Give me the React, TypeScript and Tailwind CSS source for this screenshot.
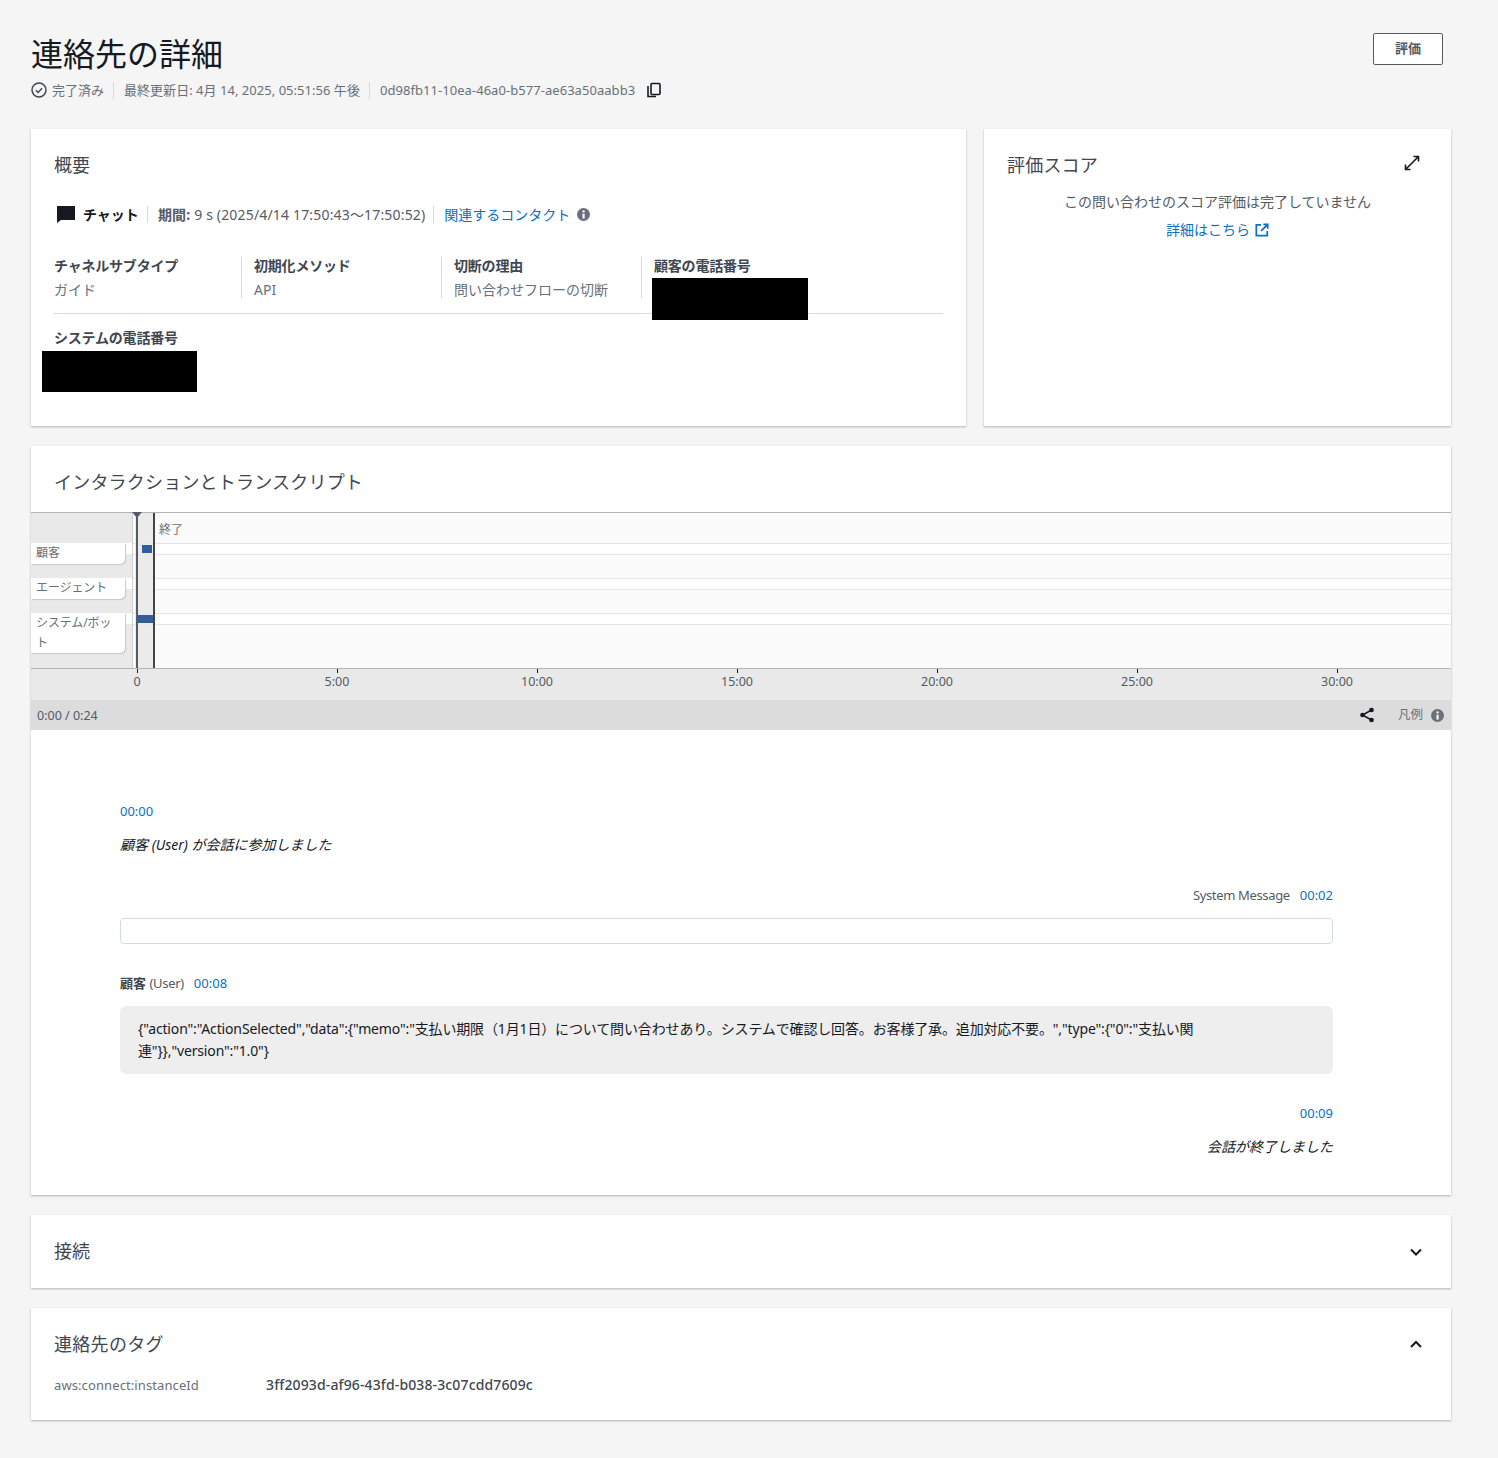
import React from "react";

const font = { fontFamily: '"Noto Sans", "Noto Sans CJK JP", sans-serif' };

const Info = ({ className = "" }: { className?: string }) => (
  <svg viewBox="0 0 16 16" className={className}>
    <circle cx="8" cy="8" r="8" fill="#687078" />
    <rect x="6.8" y="7" width="2.6" height="6" fill="#fff" />
    <rect x="6.8" y="3" width="2.6" height="2.4" fill="#fff" />
  </svg>
);

const Chevron = ({ up = false }: { up?: boolean }) => (
  <svg viewBox="0 0 16 16" className={"w-[16px] h-[16px]"} fill="none" stroke="#16191f" strokeWidth="2">
    <path d={up ? "M3 11l5-5 5 5" : "M3 5.5l5 5 5-5"} />
  </svg>
);

const Sep = ({ className = "" }: { className?: string }) => <span className={"block w-px h-[17px] bg-[#d5dbdb] " + className} />;

const Field = ({ label, value, border }: { label: string; value?: string; border?: boolean }) => (
  <div className={"w-[188px] h-[41px] " + (border ? "border-r border-[#d5dbdb]" : "")}>
    <div className="text-[14px] leading-[17px] font-bold text-[#414750] tracking-[-0.2px] whitespace-nowrap">{label}</div>
    {value && <div className="text-[14px] leading-[20px] mt-[6px] text-[#687078] whitespace-nowrap">{value}</div>}
  </div>
);

const Lane = ({ name, tall }: { name: string; tall?: boolean }) => (
  <div className="relative w-[94px]">
    <div className="absolute left-0 top-0 w-[101px] h-[11px] bg-white" />
    <div
      className={
        "relative bg-white rounded-br-[5px] shadow-[1px_1px_1px_#c8c8c8] pl-[5px] pr-[6px] text-[12px] tracking-[-0.1px] text-[#687078] " +
        (tall ? "h-[40px] leading-[20px]" : "h-[21px] leading-[20px]")
      }
    >
      {name}
    </div>
  </div>
);

const Band = ({ last }: { last?: boolean }) => (
  <div className={"h-[12px] bg-white border-y border-[#e4e4e4] " + (last ? "" : "mb-[23px]")} />
);

const Card = ({ className = "", children }: { className?: string; children: React.ReactNode }) => (
  <section className={"bg-white shadow-[0_1px_2px_rgba(0,28,36,0.3)] " + className}>{children}</section>
);

const ticks = ["0", "5:00", "10:00", "15:00", "20:00", "25:00", "30:00"];

export default function App() {
  return (
    <div style={font} className="w-[1498px] h-[1458px] bg-[#f5f5f5] pl-[31px] pr-[47px] text-[#545b64] overflow-hidden">
      <header className="flex justify-between items-start h-[129px] pr-[8px] pt-[33px]">
        <div>
          <h1 className="text-[32px] leading-[42px] text-[#16191f] whitespace-nowrap">連絡先の詳細</h1>
          <div className="flex items-center mt-[5px] text-[13px] leading-[20px] text-[#687078] whitespace-nowrap">
            <svg viewBox="0 0 16 16" className="w-[16px] h-[16px] mr-[5px]" fill="none" stroke="#414750" strokeWidth="1.5">
              <circle cx="8" cy="8" r="7" />
              <path d="M4.8 8.2l2.3 2.3 4-4.3" />
            </svg>
            <span>完了済み</span>
            <Sep className="ml-[9px] mr-[10px]" />
            <span className="tracking-[0.03px]">最終更新日: 4月 14, 2025, 05:51:56 午後</span>
            <Sep className="ml-[9px] mr-[10px]" />
            <span className="tracking-[0.05px]">0d98fb11-10ea-46a0-b577-ae63a50aabb3</span>
            <svg viewBox="0 0 16 16" className="w-[16px] h-[16px] ml-[11px]" fill="none" stroke="#16191f" strokeWidth="1.6">
              <rect x="5" y="1.5" width="9" height="11" rx="1" />
              <path d="M2 4v10.5h8" />
            </svg>
          </div>
        </div>
        <button className="w-[70px] h-[32px] border border-[#545b64] bg-white rounded-[2px] text-[13px] font-bold text-[#545b64]">評価</button>
      </header>

      <div className="w-[1420px] flex gap-[18px] h-[297px]">
        <Card className="w-[935px] pl-[23px] pr-[23px] pt-[24px]">
          <h2 className="text-[18px] leading-[24px] text-[#414750]">概要</h2>
          <div className="flex items-center mt-[27px] ml-[2px] h-[20px] text-[14px] whitespace-nowrap">
            <svg viewBox="0 0 20 20" className="w-[20px] h-[20px] mr-[7px]" fill="#16191f">
              <path d="M1 2h18v14H5l-4 3z" />
            </svg>
            <span className="font-bold text-[#16191f]">チャット</span>
            <Sep className="ml-[8px] mr-[10px]" />
            <span className="text-[#545b64] tracking-[0.17px]"><b>期間:</b> 9 s (2025/4/14 17:50:43～17:50:52)</span>
            <Sep className="ml-[8px] mr-[10px]" />
            <span className="text-[#0a71c4]">関連するコンタクト</span>
            <Info className="w-[13px] h-[13px] ml-[7px]" />
          </div>
          <div className="flex gap-[12px] mt-[33px] h-[57px] border-b border-[#d5dbdb] relative">
            <Field label="チャネルサブタイプ" value="ガイド" border />
            <Field label="初期化メソッド" value="API" border />
            <Field label="切断の理由" value="問い合わせフローの切断" border />
            <Field label="顧客の電話番号" />
            <div className="absolute left-[598px] top-[21px] w-[156px] h-[42px] bg-black" />
          </div>
          <div className="mt-[15px] text-[14px] leading-[17px] font-bold text-[#414750] tracking-[-0.2px]">システムの電話番号</div>
          <div className="-ml-[12px] w-[155px] h-[41px] bg-black mt-[5px]" />
        </Card>
        <Card className="w-[467px] pl-[23px] pr-[31px] pt-[24px] relative">
          <div className="flex justify-between items-start">
            <h2 className="text-[18px] leading-[24px] text-[#414750] tracking-[0.2px]">評価スコア</h2>
            <svg viewBox="0 0 16 16" className="w-[16px] h-[16px] mt-[2px]" fill="none" stroke="#16191f" strokeWidth="1.6">
              <path d="M1.5 14.5l13-13M9.5 1.5h5v5M1.5 9.5v5h5" />
            </svg>
          </div>
          <div className="mt-[15px] text-center text-[14px] leading-[20px] text-[#545b64] whitespace-nowrap ml-[8px]">この問い合わせのスコア評価は完了していません</div>
          <div className="mt-[8px] flex justify-center items-center text-[14px] leading-[20px] text-[#0a71c4] ml-[8px]">
            詳細はこちら
            <svg viewBox="0 0 16 16" className="w-[14px] h-[14px] ml-[5px]" fill="none" stroke="#0a71c4" strokeWidth="2">
              <path d="M7 2H1.5v12.5H14V9M9.5 1.5h5v5M14.5 1.5L7 9" />
            </svg>
          </div>
        </Card>
      </div>

      <Card className="w-[1420px] mt-[20px] h-[749px]">
        <h2 className="h-[66px] pl-[23px] pt-[24px] text-[18px] leading-[24px] text-[#414750] tracking-[0.2px]">インタラクションとトランスクリプト</h2>
        <div className="flex h-[157px] border-y border-[#b5b5b5] bg-[#e9e9e9]">
          <div className="w-[101px] pt-[30px] flex flex-col gap-[14px] shrink-0">
            <Lane name="顧客" />
            <Lane name="エージェント" />
            <Lane name="システム/ボット" tall />
          </div>
          <div className="relative flex-1 bg-[#fbfbfb] border-l border-[#d0d0d0] pt-[30px]">
            <Band />
            <Band />
            <Band last />
            <div className="absolute left-[2px] top-0 bottom-0 w-[19px] bg-[#e9e9e9]/90" />
            <div className="absolute left-[3px] top-0 bottom-0 w-[2px] bg-[#545b64]" />
            <div className="absolute left-[-1px] -top-[1px] w-0 h-0 border-x-[5px] border-x-transparent border-t-[6px] border-t-[#545b64]" />
            <div className="absolute left-[20px] top-0 bottom-0 w-[2px] bg-[#444]" />
            <div className="absolute left-[9px] top-[32px] w-[10px] h-[8px] bg-[#2f5f96]" />
            <div className="absolute left-[5px] top-[102px] w-[15px] h-[8px] bg-[#2f5f96]" />
            <div className="absolute left-[26px] top-[8px] text-[12px] leading-[18px] text-[#687078]">終了</div>
          </div>
        </div>
        <div className="flex h-[31px] bg-[#e9e9e9] pl-[6px] overflow-hidden">
          {ticks.map((t) => (
            <div key={t} className="w-[200px] shrink-0 flex flex-col items-center">
              <span className="w-px h-[4px] bg-[#16191f]" />
              <span className="text-[12.5px] leading-[18px] text-[#545b64]">{t}</span>
            </div>
          ))}
        </div>
        <div className="flex items-center h-[30px] bg-[#dcdcdc] pl-[6px] pr-[7px] text-[12.5px] text-[#545b64]">
          <span className="translate-y-[0.5px]">0:00 / 0:24</span>
          <svg viewBox="0 0 16 16" className="w-[16px] h-[16px] ml-auto" fill="#16191f" stroke="#16191f" strokeWidth="1.5">
            <path d="M12.5 3L3.5 8l9 5" fill="none" />
            <circle cx="12.5" cy="3" r="1.6" />
            <circle cx="3.5" cy="8" r="1.6" />
            <circle cx="12.5" cy="13" r="1.6" />
          </svg>
          <span className="ml-[23px] text-[#687078]">凡例</span>
          <Info className="w-[13px] h-[13px] ml-[8px]" />
        </div>

        <div className="pl-[89px] pr-[118px] pt-[71px] text-[13px]">
          <div className="text-[#0a71c4] leading-[20px]">00:00</div>
          <div className="mt-[14px] italic text-[14px] leading-[20px] text-[#16191f]">顧客 (User) が会話に参加しました</div>
          <div className="mt-[30px] flex justify-end gap-[10px] leading-[20px]">
            <span className="tracking-[-0.35px]">System Message</span>
            <span className="text-[#0a71c4]">00:02</span>
          </div>
          <div className="mt-[13px] h-[26px] rounded-[4px] border border-[#d5dbdb]" />
          <div className="mt-[29px] flex gap-[10px] leading-[20px]">
            <span><b className="text-[#414750]">顧客</b> <span className="tracking-[-0.3px]">(User)</span></span>
            <span className="text-[#0a71c4]">00:08</span>
          </div>
          <div className="mt-[13px] h-[68px] rounded-[6px] bg-[#eeeeee] pl-[18px] pr-[130px] py-[12px] text-[14px] leading-[22px] tracking-[-0.145px] text-[#16191f]">
            {'{"action":"ActionSelected","data":{"memo":"支払い期限（1月1日）について問い合わせあり。システムで確認し回答。お客様了承。追加対応不要。","type":{"0":"支払い関連"}},"version":"1.0"}'}
          </div>
          <div className="mt-[29px] text-right text-[#0a71c4] leading-[20px]">00:09</div>
          <div className="mt-[14px] text-right italic text-[14px] leading-[20px] text-[#16191f]">会話が終了しました</div>
        </div>
      </Card>

      <Card className="w-[1420px] mt-[20px] h-[73px] pl-[23px] pr-[27px] flex items-center justify-between">
        <h2 className="text-[18px] text-[#414750]">接続</h2>
        <Chevron />
      </Card>

      <Card className="w-[1420px] mt-[20px] h-[112px] pl-[23px] pr-[27px] pt-[24px]">
        <div className="flex items-center justify-between h-[24px]">
          <h2 className="text-[18px] text-[#414750] tracking-[0.3px]">連絡先のタグ</h2>
          <Chevron up />
        </div>
        <div className="flex mt-[19px] text-[13px] leading-[20px]">
          <span className="w-[212px] text-[#687078] tracking-[0.1px]">aws:connect:instanceId</span>
          <span className="text-[14px] font-medium text-[#414750] tracking-[0.13px]">3ff2093d-af96-43fd-b038-3c07cdd7609c</span>
        </div>
      </Card>
    </div>
  );
}
